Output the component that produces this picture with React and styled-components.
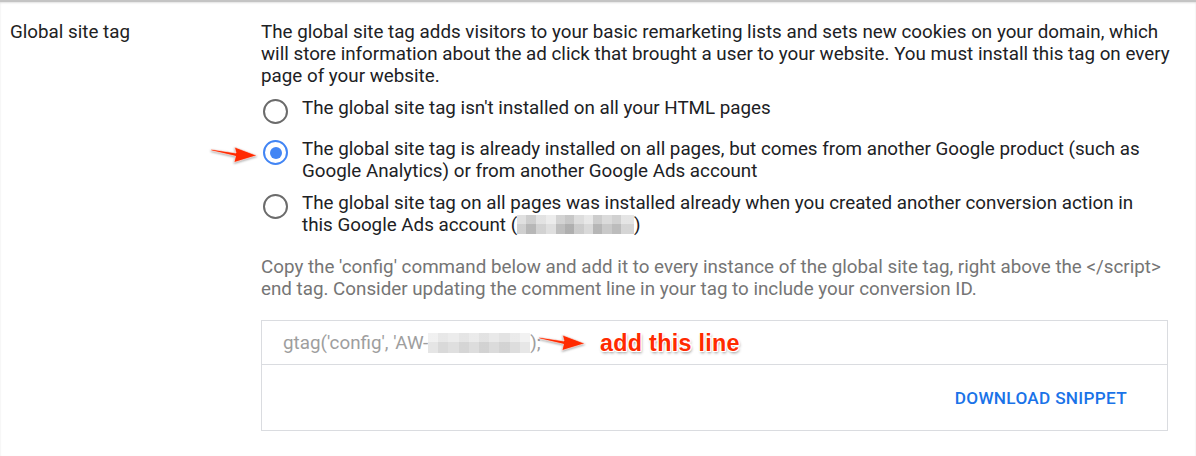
import React from "react";
import styled, { createGlobalStyle } from "styled-components";

const GlobalStyle = createGlobalStyle`
  html, body { margin: 0; padding: 0; background: #fff; }
  body { font-family: Roboto, "Noto Sans", Arial, sans-serif; -webkit-font-smoothing: antialiased; }
`;

const Page = styled.div`
  width: 1196px;
  height: 456px;
  box-sizing: border-box;
  border-top: 2px solid #c4c4c4;
  box-shadow: inset 0 1px 2px rgba(0, 0, 0, 0.12);
  background: #fff;
`;

const Row = styled.div`
  display: flex;
  padding: 19px 0 0 10px;
`;

const Label = styled.div`
  width: 251px;
  flex: none;
  font-size: 18.8px;
  line-height: 22px;
  color: #212121;
`;

const Content = styled.div`
  width: 909px;
  display: flex;
  flex-direction: column;
`;

const Description = styled.p`
  margin: 0;
  font-size: 18.8px;
  line-height: 22px;
  color: #202124;
`;

const RadioGroup = styled.div`
  display: flex;
  flex-direction: column;
  margin-top: 5px;
`;

const Option = styled.label`
  position: relative;
  display: flex;
  padding: 5px 0;
  font-size: 18.8px;
  line-height: 22px;
  color: #202124;
`;

const RadioSlot = styled.span`
  flex: none;
  width: 41px;
  height: 31px;
  display: flex;
  align-items: flex-start;
`;

const RadioCircle = styled.span`
  box-sizing: border-box;
  width: 25px;
  height: 25px;
  margin: 2px 0 0 2px;
  border-radius: 50%;
  border: 2.5px solid ${(p) => (p.$checked ? "#4285f4" : "#6b6b6b")};
  display: flex;
  align-items: center;
  justify-content: center;
  &::after {
    content: "";
    width: 12px;
    height: 12px;
    border-radius: 50%;
    background: #4285f4;
    display: ${(p) => (p.$checked ? "block" : "none")};
  }
`;

const OptionText = styled.span`
  flex: 1;
  padding-right: 6px;
`;

const Redacted = styled.span`
  display: inline-block;
  vertical-align: -3px;
  width: ${(p) => p.$w}px;
  height: ${(p) => p.$h}px;
  background:
    linear-gradient(180deg, rgba(255,255,255,0.25) 0 45%, rgba(0,0,0,0.03) 45% 100%),
    linear-gradient(90deg, ${(p) => p.$stops});
`;

const HelpText = styled.p`
  margin: 15px 0 0;
  font-size: 18.8px;
  line-height: 22px;
  color: #757575;
`;

const SnippetBox = styled.div`
  width: 907px;
  box-sizing: border-box;
  margin-top: 20px;
  border: 1px solid #dadce0;
`;

const CodeRow = styled.div`
  position: relative;
  height: 43px;
  display: flex;
  align-items: center;
  padding-left: 21px;
  border-bottom: 1px solid #dadce0;
  font-size: 18.8px;
  color: #9e9e9e;
`;

const ActionRow = styled.div`
  height: 65px;
  display: flex;
  align-items: center;
  justify-content: flex-end;
  padding-right: 32px;
`;

const TextButton = styled.button`
  border: none;
  background: none;
  padding: 6px 8px;
  font-family: Roboto, Arial, sans-serif;
  font-weight: 500;
  font-size: 17.2px;
  letter-spacing: 0.3px;
  color: #1a73e8;
  text-transform: uppercase;
  cursor: pointer;
`;

const ArrowMark = styled.svg`
  position: absolute;
  left: ${(p) => p.$x}px;
  top: ${(p) => p.$y}px;
  overflow: visible;
`;

const Callout = styled.span`
  position: absolute;
  left: 338px;
  top: 9px;
  font-family: "Liberation Sans", Arial, sans-serif;
  font-weight: 700;
  font-size: 23.3px;
  letter-spacing: 0.3px;
  color: #ff2a00;
  white-space: nowrap;
  text-shadow:
    1px 0 0 #fff, -1px 0 0 #fff, 0 1px 0 #fff, 0 -1px 0 #fff,
    1px 1px 0 #fff, -1px -1px 0 #fff, 1px -1px 0 #fff, -1px 1px 0 #fff,
    1px 2px 3px rgba(0, 0, 0, 0.45);
`;

const Arrow = ({ x, y }) => (
  <ArrowMark $x={x} $y={y} width="46" height="18" viewBox="0 0 46 18">
    <path
      d="M0 4.2 L25 8 L23.5 2 L46 10.5 L23 17.5 L24.5 11.2 L0 5.6 Z"
      fill="#ff2a00"
      stroke="#fff"
      strokeWidth="0.6"
      style={{ filter: "drop-shadow(0.5px 1px 1px rgba(0,0,0,0.35))" }}
    />
  </ArrowMark>
);

const blurA =
  "#d6d6d6 0 8%, #bdbdbd 8% 16%, #d9d9d9 16% 25%, #e6e6e6 25% 33%, #c4c4c4 33% 41%, #b5b5b5 41% 49%, #d2d2d2 49% 57%, #e0e0e0 57% 65%, #bcbcbc 65% 73%, #cfcfcf 73% 81%, #c2c2c2 81% 89%, #dcdcdc 89% 100%";
const blurB =
  "#ececec 0 10%, #e0e0e0 10% 20%, #e6e6e6 20% 30%, #dcdcdc 30% 40%, #e4e4e4 40% 50%, #d9d9d9 50% 60%, #e2e2e2 60% 70%, #dadada 70% 80%, #e4e4e4 80% 90%, #eeeeee 90% 100%";

export default function App() {
  return (
    <>
      <GlobalStyle />
      <Page>
        <Row>
          <Label>Global site tag</Label>
          <Content>
            <Description>
              The global site tag adds visitors to your basic remarketing lists and sets new cookies on your domain, which
              will store information about the ad click that brought a user to your website. You must install this tag on
              every page of your website.
            </Description>
            <RadioGroup>
              <Option>
                <RadioSlot>
                  <RadioCircle />
                </RadioSlot>
                <OptionText>The global site tag isn't installed on all your HTML pages</OptionText>
              </Option>
              <Option>
                <Arrow x={-50} y={12} />
                <RadioSlot>
                  <RadioCircle $checked />
                </RadioSlot>
                <OptionText>
                  The global site tag is already installed on all pages, but comes from another Google product (such as
                  Google Analytics) or from another Google Ads account
                </OptionText>
              </Option>
              <Option>
                <RadioSlot>
                  <RadioCircle />
                </RadioSlot>
                <OptionText>
                  The global site tag on all pages was installed already when you created another conversion action in
                  this Google Ads account (<Redacted $w={117} $h={19} $stops={blurA} />)
                </OptionText>
              </Option>
            </RadioGroup>
            <HelpText>
              Copy the 'config' command below and add it to every instance of the global site tag, right above the
              &lt;/script&gt; end tag. Consider updating the comment line in your tag to include your conversion ID.
            </HelpText>
            <SnippetBox>
              <CodeRow>
                gtag('config', 'AW-<Redacted $w={102} $h={20} $stops={blurB} />);
                <Arrow x={277} y={12} />
                <Callout>add this line</Callout>
              </CodeRow>
              <ActionRow>
                <TextButton>Download snippet</TextButton>
              </ActionRow>
            </SnippetBox>
          </Content>
        </Row>
      </Page>
    </>
  );
}
